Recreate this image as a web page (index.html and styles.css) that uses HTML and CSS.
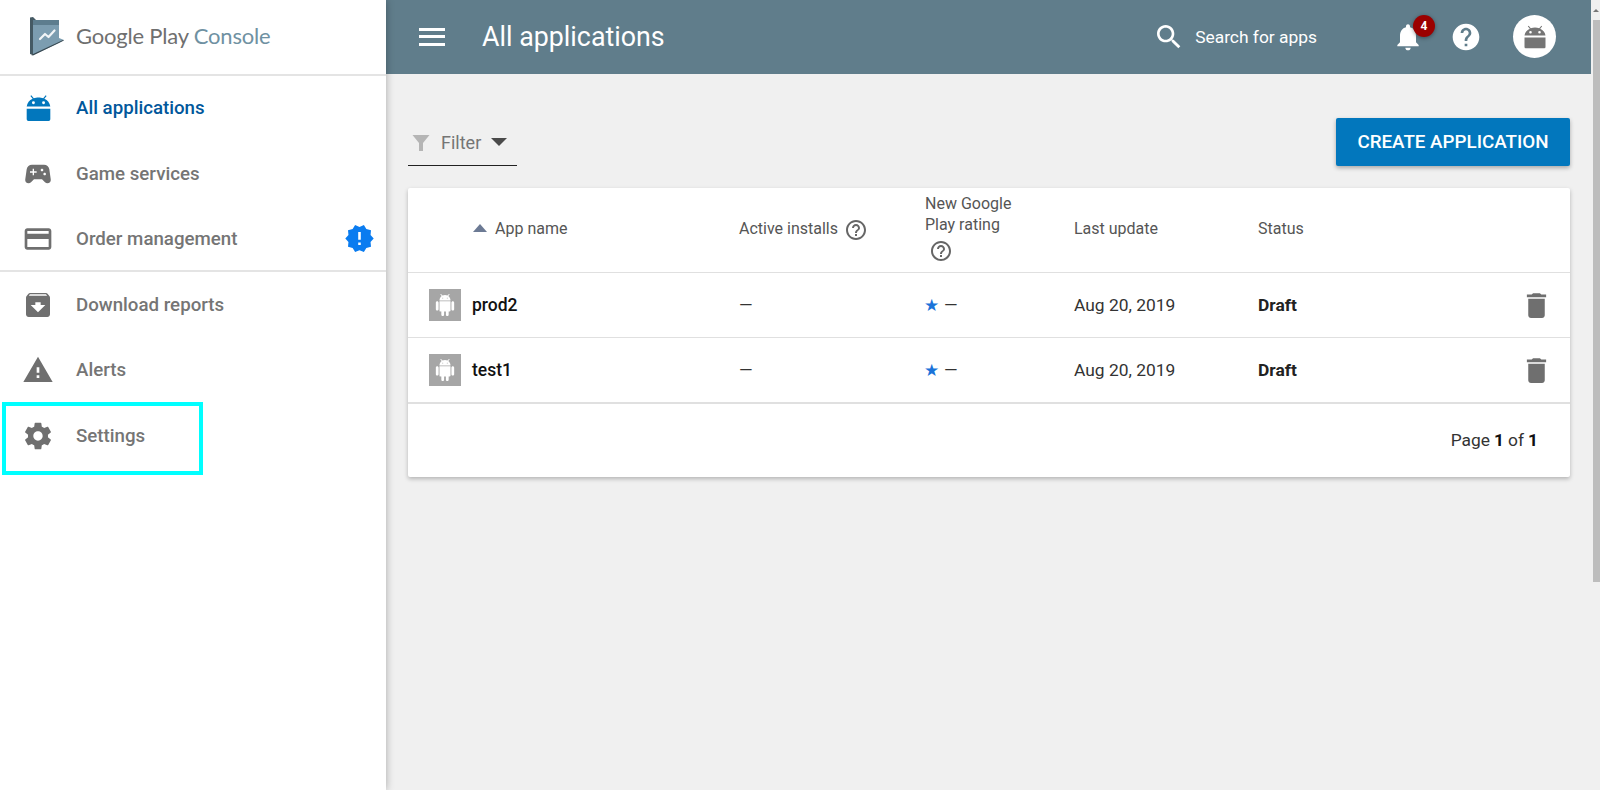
FILE: index.html
```html
<!DOCTYPE html>
<html lang="en">
<head>
<meta charset="utf-8">
<title>All applications - Google Play Console</title>
<link rel="stylesheet" href="styles.css">
</head>
<body>
<svg class="defs" width="0" height="0" aria-hidden="true">
  <symbol id="i-droid" viewBox="0 0 24 24"><path d="M5.6 1.2l2.2 2.6C9 3.2 10.500 3 12 3s3 .2 4.200 .8l2.200-2.600.8.6-2 2.500C20.200 5.600 22 8 22.500 11h-21C2 8 3.800 5.600 6.800 4.300l-2-2.500zM7.500 6.500a1.300 1.300 0 1 0 0 2.600 1.300 1.300 0 0 0 0-2.600zm9 0a1.300 1.300 0 1 0 0 2.600 1.300 1.300 0 0 0 0-2.600zM1.500 13h21v9.500a1.500 1.500 0 0 1-1.500 1.500H3a1.500 1.500 0 0 1-1.500-1.500z"/></symbol>
  <symbol id="i-help" viewBox="0 0 24 24"><path d="M11 18h2v-2h-2v2zm1-16C6.480 2 2 6.480 2 12s4.480 10 10 10 10-4.480 10-10S17.520 2 12 2zm0 18c-4.410 0-8-3.590-8-8s3.590-8 8-8 8 3.590 8 8-3.590 8-8 8zm0-14c-2.210 0-4 1.790-4 4h2c0-1.100.9-2 2-2s2 .9 2 2c0 2-3 1.750-3 5h2c0-2.250 3-2.500 3-5 0-2.210-1.790-4-4-4z"/></symbol>
  <symbol id="i-trash" viewBox="0 0 24 24"><path d="M6 19c0 1.100.9 2 2 2h8c1.100 0 2-.9 2-2V7H6v12zM19 4h-3.500l-1-1h-5l-1 1H5v2h14V4z"/></symbol>
  <symbol id="i-android" viewBox="0 0 24 24"><path d="M6 18c0 .55.45 1 1 1h1v3.500c0 .83.67 1.500 1.500 1.500s1.500-.67 1.500-1.500V19h2v3.500c0 .83.67 1.500 1.500 1.500s1.500-.67 1.500-1.500V19h1c.55 0 1-.45 1-1V8H6v10zM3.500 8C2.670 8 2 8.670 2 9.500v7c0 .83.67 1.500 1.500 1.500S5 17.330 5 16.500v-7C5 8.670 4.330 8 3.500 8zm17 0c-.83 0-1.500.67-1.500 1.500v7c0 .83.67 1.500 1.500 1.500s1.500-.67 1.500-1.500v-7c0-.83-.67-1.500-1.500-1.500zm-4.970-5.840l1.300-1.300c.2-.2.2-.51 0-.71-.2-.2-.51-.2-.71 0l-1.480 1.480C13.850 1.230 12.950 1 12 1c-.96 0-1.860.23-2.660.63L7.850.15c-.2-.2-.51-.2-.71 0-.2.2-.2.51 0 .71l1.310 1.310C6.970 3.260 6 5.010 6 7h12c0-1.990-.97-3.750-2.470-4.840zM10 5H9V4h1v1zm5 0h-1V4h1v1z"/></symbol>
</svg>

<aside class="sidebar">
  <div class="brand">
    <svg class="brand-mark" viewBox="0 0 36 40" aria-hidden="true">
      <path fill="#455a64" d="M1 1.500 4 1 7 4v32l-3 3-3-1z"/>
      <path fill="#5d7d8e" d="M4 4h26v6H4z"/>
      <path fill="#7c9db0" d="M4 9h26v13l5 2-5 3-26 12z"/>
      <path fill="#37474f" d="M2 39l32-15 1 .5L4 39.500z"/>
      <path fill="none" stroke="#f2f5f7" stroke-width="2.200" stroke-linecap="round" stroke-linejoin="round" d="M11 23l5-5 3.500 3 6-6.500"/>
    </svg>
    <span class="brand-name">Google Play <span class="brand-console">Console</span></span>
  </div>
  <nav class="nav-first">
    <a class="nav-item is-active"><span class="nav-icon"><svg class="icon-droid" viewBox="0 0 24 24"><use href="#i-droid"/></svg></span>All applications</a>
    <a class="nav-item"><span class="nav-icon"><svg viewBox="0 0 24 24"><path d="M21.580 16.090l-1.090-7.660C20.210 6.460 18.520 5 16.530 5H7.470C5.480 5 3.790 6.460 3.510 8.430l-1.090 7.660C2.200 17.630 3.390 19 4.940 19c.68 0 1.320-.27 1.800-.75L9 16h6l2.250 2.250c.48.48 1.130.75 1.800.75 1.560 0 2.750-1.370 2.530-2.910zM11 11H9v2H8v-2H6v-1h2V8h1v2h2v1zm4-1c-.55 0-1-.45-1-1s.45-1 1-1 1 .45 1 1-.45 1-1 1zm2 3c-.55 0-1-.45-1-1s.45-1 1-1 1 .45 1 1-.45 1-1 1z"/></svg></span>Game services</a>
    <a class="nav-item"><span class="nav-icon"><svg viewBox="0 0 24 24"><path d="M20 4H4c-1.110 0-1.990.89-1.990 2L2 18c0 1.110.89 2 2 2h16c1.110 0 2-.89 2-2V6c0-1.110-.89-2-2-2zm0 14H4v-6h16v6zm0-10H4V6h16v2z"/></svg></span>Order management<svg class="nav-badge" viewBox="0 0 24 24"><path d="M23 12l-2.440-2.780.34-3.680-3.610-.82-1.890-3.180L12 3 8.600 1.540 6.710 4.720l-3.610.81.34 3.680L1 12l2.440 2.780-.34 3.690 3.610.82 1.890 3.180L12 21l3.400 1.460 1.890-3.180 3.610-.82-.34-3.680L23 12zm-10 5h-2v-2h2v2zm0-4h-2V7h2v6z"/></svg></a>
  </nav>
  <nav class="nav-second">
    <a class="nav-item"><span class="nav-icon"><svg viewBox="0 0 24 24"><path d="M20.540 5.230l-1.390-1.680C18.880 3.210 18.470 3 18 3H6c-.47 0-.88.21-1.160.55L3.460 5.230C3.170 5.570 3 6.020 3 6.500V19c0 1.100.9 2 2 2h14c1.100 0 2-.9 2-2V6.500c0-.48-.17-.93-.46-1.270zM12 17.500L6.500 12H10v-2h4v2h3.500L12 17.500zM5.120 5l.81-1h12l.94 1H5.120z"/></svg></span>Download reports</a>
    <a class="nav-item"><span class="nav-icon"><svg viewBox="0 0 24 24"><path d="M1 21h22L12 2 1 21zm12-3h-2v-2h2v2zm0-4h-2v-4h2v4z"/></svg></span>Alerts</a>
    <a class="nav-item"><span class="nav-icon"><svg viewBox="0 0 24 24"><path d="M19.430 12.980c.04-.32.07-.64.07-.98s-.03-.66-.07-.98l2.110-1.650c.19-.15.24-.42.12-.64l-2-3.460c-.12-.22-.39-.3-.61-.22l-2.490 1c-.52-.4-1.080-.73-1.690-.98l-.38-2.650C14.460 2.180 14.250 2 14 2h-4c-.25 0-.46.18-.49.42l-.38 2.650c-.61.25-1.170.59-1.690.98l-2.490-1c-.23-.09-.49 0-.61.22l-2 3.460c-.13.22-.07.49.12.64l2.110 1.650c-.04.32-.07.65-.07.98s.03.66.07.98l-2.110 1.650c-.19.15-.24.42-.12.64l2 3.460c.12.22.39.3.61.22l2.490-1c.52.4 1.080.73 1.690.98l.38 2.650c.03.24.24.42.49.42h4c.25 0 .46-.18.49-.42l.38-2.650c.61-.25 1.170-.59 1.690-.98l2.490 1c.23.09.49 0 .61-.22l2-3.460c.12-.22.07-.49-.12-.64l-2.110-1.650zM12 15.500c-1.930 0-3.500-1.570-3.500-3.500s1.570-3.500 3.500-3.500 3.500 1.570 3.500 3.500-1.570 3.500-3.500 3.500z"/></svg></span>Settings</a>
  </nav>
  <div class="highlight"></div>
</aside>

<div class="main">
  <header class="topbar">
    <button class="menu-btn" aria-label="Menu"><span></span><span></span><span></span></button>
    <h1 class="title">All applications</h1>
    <div class="search">
      <svg viewBox="0 0 24 24"><path d="M15.500 14h-.79l-.28-.27C15.410 12.590 16 11.110 16 9.500 16 5.910 13.090 3 9.500 3S3 5.910 3 9.500 5.910 16 9.500 16c1.610 0 3.090-.59 4.230-1.570l.27.28v.79l5 4.990L20.490 19l-4.990-5zm-6 0C7.010 14 5 11.990 5 9.500S7.010 5 9.500 5 14 7.010 14 9.500 11.990 14 9.500 14z"/></svg>
      <span>Search for apps</span>
    </div>
    <div class="bell">
      <svg viewBox="0 0 24 24"><path d="M12 22c1.100 0 2-.9 2-2h-4c0 1.100.89 2 2 2zm6-6v-5c0-3.070-1.640-5.640-4.500-6.320V4c0-.83-.67-1.500-1.500-1.500s-1.500.67-1.500 1.500v.68C7.630 5.360 6 7.920 6 11v5l-2 2v1h16v-1l-2-2z"/></svg>
      <span class="bell-count">4</span>
    </div>
    <svg class="top-help" viewBox="0 0 24 24"><path d="M12 2C6.480 2 2 6.480 2 12s4.480 10 10 10 10-4.480 10-10S17.520 2 12 2zm1 17h-2v-2h2v2zm2.070-7.750l-.9.92C13.450 12.900 13 13.500 13 15h-2v-.5c0-1.100.45-2.100 1.170-2.830l1.240-1.260c.37-.36.59-.86.59-1.410 0-1.100-.9-2-2-2s-2 .9-2 2H8c0-2.210 1.790-4 4-4s4 1.790 4 4c0 .88-.36 1.680-.93 2.250z"/></svg>
    <div class="avatar"><svg viewBox="0 0 24 24"><use href="#i-droid"/></svg></div>
  </header>

  <main class="content">
    <div class="toolbar">
      <div class="filter">
        <svg class="filter-icon" viewBox="0 0 18 18"><path d="M.5 1h17l-6.500 8v8H7V9z"/></svg>
        <span>Filter</span>
        <span class="filter-caret"></span>
      </div>
      <button class="create-btn">CREATE APPLICATION</button>
    </div>

    <section class="card">
      <div class="row row-head">
        <div class="cell-name head-name"><span class="sort-caret"></span>App name</div>
        <div class="head-installs">Active installs <svg class="help-small help-installs" viewBox="0 0 24 24"><use href="#i-help"/></svg></div>
        <div class="head-rating">New Google<br>Play rating<svg class="help-small help-rating" viewBox="0 0 24 24"><use href="#i-help"/></svg></div>
        <div class="head-label">Last update</div>
        <div class="head-label">Status</div>
        <div></div>
      </div>
      <div class="row row-app">
        <div class="cell-name"><span class="thumb"><svg viewBox="0 0 24 24"><use href="#i-android"/></svg></span><b class="app-name">prod2</b></div>
        <div class="dash">—</div>
        <div class="rating"><span class="star">★</span> <span class="dash">—</span></div>
        <div>Aug 20, 2019</div>
        <div class="status">Draft</div>
        <svg class="trash" viewBox="0 0 24 24"><use href="#i-trash"/></svg>
      </div>
      <div class="row row-app row-last">
        <div class="cell-name"><span class="thumb"><svg viewBox="0 0 24 24"><use href="#i-android"/></svg></span><b class="app-name">test1</b></div>
        <div class="dash">—</div>
        <div class="rating"><span class="star">★</span> <span class="dash">—</span></div>
        <div>Aug 20, 2019</div>
        <div class="status">Draft</div>
        <svg class="trash" viewBox="0 0 24 24"><use href="#i-trash"/></svg>
      </div>
      <footer class="pager">Page <b>1</b> of <b>1</b></footer>
    </section>
  </main>
</div>

<div class="scrollbar"><span class="scroll-arrow"></span><span class="scroll-thumb"></span></div>
</body>
</html>
```

FILE: styles.css
```css
* { box-sizing: border-box; }
html, body { height: 100%; }
body {
  margin: 0;
  display: flex;
  height: 790px;
  overflow: hidden;
  background: #f0f0f0;
  font-family: Roboto, "Liberation Sans", sans-serif;
  color: #212121;
}
.defs { position: absolute; }

/* Sidebar */
.sidebar {
  position: relative;
  flex: 0 0 386px;
  background: #fff;
  box-shadow: 0 0 8px rgba(0, 0, 0, .3);
  z-index: 2;
}
.brand {
  height: 76px;
  border-bottom: 2px solid #e4e4e4;
  display: flex;
  align-items: center;
  padding: 0 0 3px 29px;
}
.brand-mark { width: 36px; height: 40px; margin-right: 11px; flex: none; }
.brand-name { font-family: Lato, sans-serif; font-size: 22px; letter-spacing: -.2px; color: #6f6f6f; white-space: nowrap; }
.brand-console { color: #6f91a2; }
.nav-first { height: 197px; border-bottom: 2px solid #e4e4e4; }
.nav-first .nav-item:first-child { margin-top: -1px; }
.nav-first .nav-item:nth-child(2) { margin-top: 1px; }
.nav-second .nav-item:last-child { margin-top: 1px; }
.nav-item {
  display: flex;
  align-items: center;
  height: 65px;
  padding-left: 24px;
  font-size: 18.700px;
  font-weight: 500;
  color: #757575;
}
.nav-item.is-active { color: #01579b; }
.nav-icon { width: 28px; height: 28px; margin-right: 24px; flex: none; fill: #6f6f6f; display: flex; align-items: center; justify-content: center; }
.nav-icon svg { width: 32px; height: 32px; flex: none; margin: -2px; }
.is-active .nav-icon svg.icon-droid { width: 27px; height: 27px; fill: #0277bd; margin: 0; }
.nav-badge { width: 31px; height: 31px; fill: #0a7cf0; margin-left: auto; margin-right: 11px; }
.highlight {
  position: absolute;
  left: 2px;
  top: 402px;
  width: 201px;
  height: 73px;
  border: 4px solid #00ffff;
}

/* Main */
.main { flex: 0 0 1205px; display: flex; flex-direction: column; }
.topbar {
  height: 74px;
  background: #607d8b;
  display: flex;
  align-items: center;
  padding: 0 35px 1px 33px;
  color: #fff;
}
.menu-btn { width: 26px; height: 18px; padding: 0; border: 0; background: none; display: flex; flex-direction: column; justify-content: space-between; margin-right: 37px; }
.menu-btn span { display: block; height: 3px; background: #fff; }
.title { margin: 0; font-size: 26.800px; font-weight: 400; flex: 1; }
.search { display: flex; align-items: center; font-size: 17.400px; font-weight: 400; margin-right: 75px; }
.search svg { width: 32px; height: 32px; fill: #fff; margin-right: 10px; }
.bell { position: relative; width: 32px; height: 32px; margin-right: 26px; }
.bell svg { width: 32px; height: 32px; fill: #fff; }
.bell-count {
  position: absolute;
  left: 21px;
  top: -6px;
  width: 22px;
  height: 22px;
  border-radius: 50%;
  background: #9b0000;
  box-shadow: 0 1px 4px rgba(0, 0, 0, .4);
  font-size: 12px;
  font-weight: 700;
  line-height: 22px;
  text-align: center;
}
.top-help { width: 32px; height: 32px; fill: #fff; margin-right: 31px; }
.avatar { width: 43px; height: 43px; border-radius: 50%; background: #fff; display: flex; align-items: center; justify-content: center; }
.avatar svg { width: 24px; height: 25px; fill: #757575; }

.content { padding: 44px 21px 0 22px; }
.toolbar { display: flex; justify-content: space-between; align-items: flex-start; height: 70px; }
.filter {
  width: 109px;
  height: 48px;
  border-bottom: 1px solid #212121;
  display: flex;
  align-items: center;
  padding-top: 2px;
  font-size: 18px;
  color: #757575;
}
.filter-icon { width: 18px; height: 18px; fill: #b5b5b5; margin: 0 11px 0 4px; }
.filter-caret { width: 0; height: 0; border: 8px solid transparent; border-top-color: #4a4a4a; border-bottom: 0; margin: -2px 0 0 10px; }
.create-btn {
  width: 234px;
  height: 48px;
  border: 0;
  border-radius: 2px;
  background: #0277bd;
  box-shadow: 0 2px 4px rgba(0, 0, 0, .3);
  color: #fff;
  font: 500 18.800px Roboto, sans-serif;
  padding: 0;
}

.card {
  background: #fff;
  border-radius: 2px;
  box-shadow: 0 2px 4px rgba(0, 0, 0, .25);
}
.row {
  display: grid;
  grid-template-columns: 331px 186px 149px 184px 1fr 50px;
  align-items: center;
  border-bottom: 1px solid #e0e0e0;
}
.row-head { height: 85px; font-size: 16px; color: #555; }
.row-app { height: 65px; font-size: 17.400px; color: #333; }
.row-last { height: 66px; border-bottom-width: 2px; }
.cell-name { display: flex; align-items: center; padding-left: 21px; }
.head-name { padding-left: 65px; padding-bottom: 4px; }
.head-label { padding-bottom: 4px; }
.sort-caret { width: 0; height: 0; border: 7px solid transparent; border-bottom: 8px solid #6c7a94; border-top: 0; margin-right: 8px; }
.head-installs { display: flex; align-items: center; gap: 6px; padding-bottom: 4px; }
.head-rating { line-height: 21px; padding-bottom: 5px; }
.help-small { width: 24px; height: 24px; fill: #666; flex: none; display: block; }
.help-installs { margin-bottom: -4px; }
.help-rating { margin: 4px 0 0 4px; }
.thumb { width: 32px; height: 32px; background: #a6a6a6; display: flex; align-items: center; justify-content: center; margin-right: 11px; }
.thumb svg { width: 22px; height: 22px; fill: #fff; }
.app-name { font-size: 17.500px; font-weight: 500; color: #111; }
.dash { color: #333; }
.rating { display: flex; align-items: center; gap: 5px; }
.star { color: #1a73d9; font-size: 17px; margin-left: -1px; }
.status { font-weight: 700; color: #222; }
.trash { width: 33px; height: 33px; fill: #6f6f6f; }
.pager { height: 73px; display: flex; align-items: center; justify-content: flex-end; gap: 4px; padding: 0 32px 1px 0; font-size: 17.400px; color: #333; }
.pager b { font-weight: 700; color: #111; }

/* Scrollbar */
.scrollbar { flex: 0 0 9px; display: flex; flex-direction: column; align-items: flex-end; }
.scroll-arrow { width: 0; height: 0; margin: 9px 1px 8px 0; border: 3px solid transparent; border-bottom: 3px solid #777; border-top: 0; }
.scroll-thumb { width: 7px; height: 562px; background: #bdbdbd; }
```
